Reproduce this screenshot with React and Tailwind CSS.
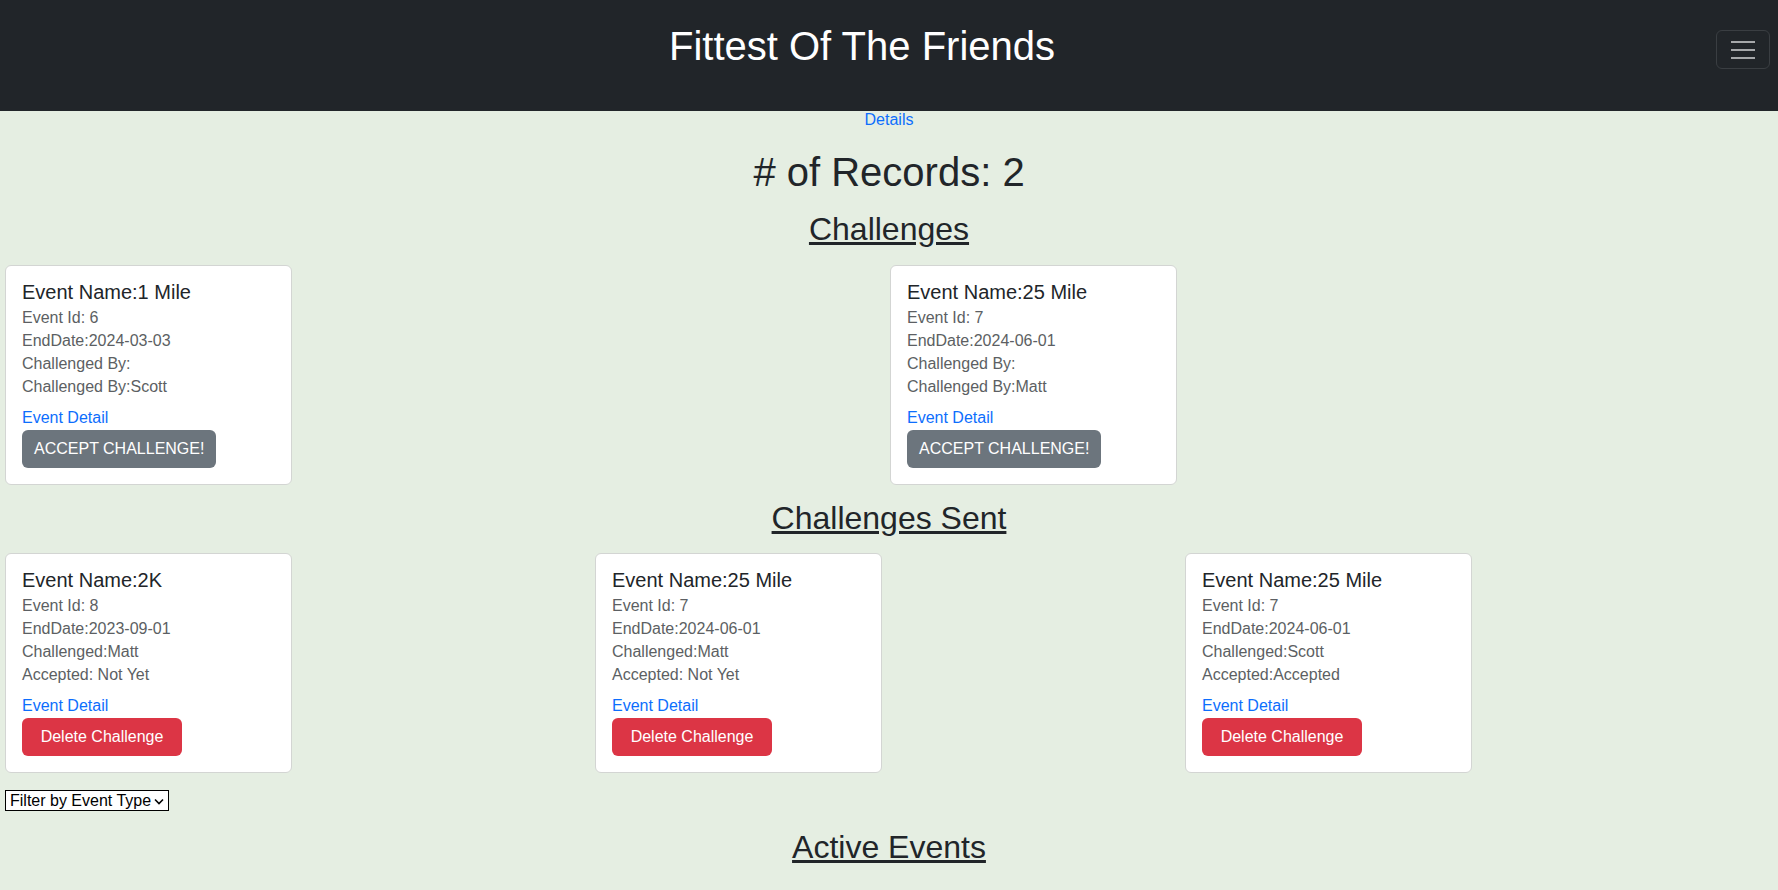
import React from 'react';

const challenges = [
  { id: 6, name: '1 Mile', endDate: '2024-03-03', by: 'Scott' },
  { id: 7, name: '25 Mile', endDate: '2024-06-01', by: 'Matt' },
];

const sent = [
  { id: 8, name: '2K', endDate: '2023-09-01', challenged: 'Matt', accepted: ' Not Yet' },
  { id: 7, name: '25 Mile', endDate: '2024-06-01', challenged: 'Matt', accepted: ' Not Yet' },
  { id: 7, name: '25 Mile', endDate: '2024-06-01', challenged: 'Scott', accepted: 'Accepted' },
];

const Card = ({ title, lines, children }) => (
  <div className="ml-px w-[287px] rounded-[6px] border border-[#d3d5d3] bg-white p-4">
    <div className="mb-[4px] text-[20px] leading-[20px] text-[#212529]">{title}</div>
    <div className="text-[16px] leading-[23px] text-[#5c5f63]">
      {lines.map((l, i) => (
        <div key={i}>{l}</div>
      ))}
    </div>
    <a href="#" className="mt-[8px] block w-fit text-[16px] leading-[23px] text-[#0d6efd] no-underline">
      Event Detail
    </a>
    {children}
  </div>
);

const SectionTitle = ({ children, className = '' }) => (
  <h2 className={`text-center text-[32px] leading-[38px] text-[#212529] underline ${className}`}>{children}</h2>
);

export default function App() {
  return (
    <div className="min-h-[890px] bg-[#e5eee2] font-['Liberation_Sans',Arial,sans-serif]">
      <header className="flex h-[111px] items-start bg-[#212529] px-2">
        <div className="mt-[22px] flex-1 text-center text-[40px] leading-[48px] text-white">
          Fittest Of The Friends
        </div>
        <button className="mt-[30px] flex h-[39px] w-[54px] items-center justify-center rounded-[6px] border border-[#3a3e42]">
          <svg width="24" height="18" viewBox="0 0 24 18">
            <path d="M0 1h24M0 9h24M0 17h24" stroke="#a6a8aa" strokeWidth="2" />
          </svg>
        </button>
      </header>

      <div className="text-center text-[16px] leading-[17px]">
        <a href="#" className="text-[#0d6efd] no-underline">Details</a>
      </div>

      <h1 className="mt-[20px] text-center text-[40px] leading-[48px] text-[#212529]"># of Records: 2</h1>

      <SectionTitle className="mt-[14px]">Challenges</SectionTitle>

      <div className="mt-[17px] grid grid-cols-2 px-[4px]">
        {challenges.map((c, i) => (
          <Card
            key={i}
            title={`Event Name:${c.name}`}
            lines={[`Event Id: ${c.id}`, `EndDate:${c.endDate}`, 'Challenged By:', `Challenged By:${c.by}`]}
          >
            <button className="mt-[1px] block h-[38px] rounded-[6px] bg-[#6c757d] px-3 text-[16px] leading-[24px] text-white">
              ACCEPT CHALLENGE!
            </button>
          </Card>
        ))}
      </div>

      <SectionTitle className="mt-[14px]">Challenges Sent</SectionTitle>

      <div className="mt-[16px] grid grid-cols-3 px-[4px]">
        {sent.map((c, i) => (
          <Card
            key={i}
            title={`Event Name:${c.name}`}
            lines={[`Event Id: ${c.id}`, `EndDate:${c.endDate}`, `Challenged:${c.challenged}`, `Accepted:${c.accepted}`]}
          >
            <button className="mt-[1px] block h-[38px] w-[160px] rounded-[6px] bg-[#dc3545] text-center text-[16px] leading-[24px] text-white">
              Delete Challenge
            </button>
          </Card>
        ))}
      </div>

      <div className="mt-[16px] px-[4px]">
        <div className="relative ml-px inline-flex h-[21px] w-[164px] items-center border border-black bg-white">
          <select className="h-full w-full appearance-none bg-transparent pl-[4px] text-[16px] leading-[19px] text-black outline-none">
            <option>Filter by Event Type</option>
          </select>
          <svg className="pointer-events-none absolute right-[4px] top-[7px]" width="10" height="7" viewBox="0 0 10 7">
            <path d="M1 1.5l4 4 4-4" fill="none" stroke="#000" strokeWidth="1.6" />
          </svg>
        </div>
      </div>

      <SectionTitle className="mt-[15px]">Active Events</SectionTitle>
    </div>
  );
}
